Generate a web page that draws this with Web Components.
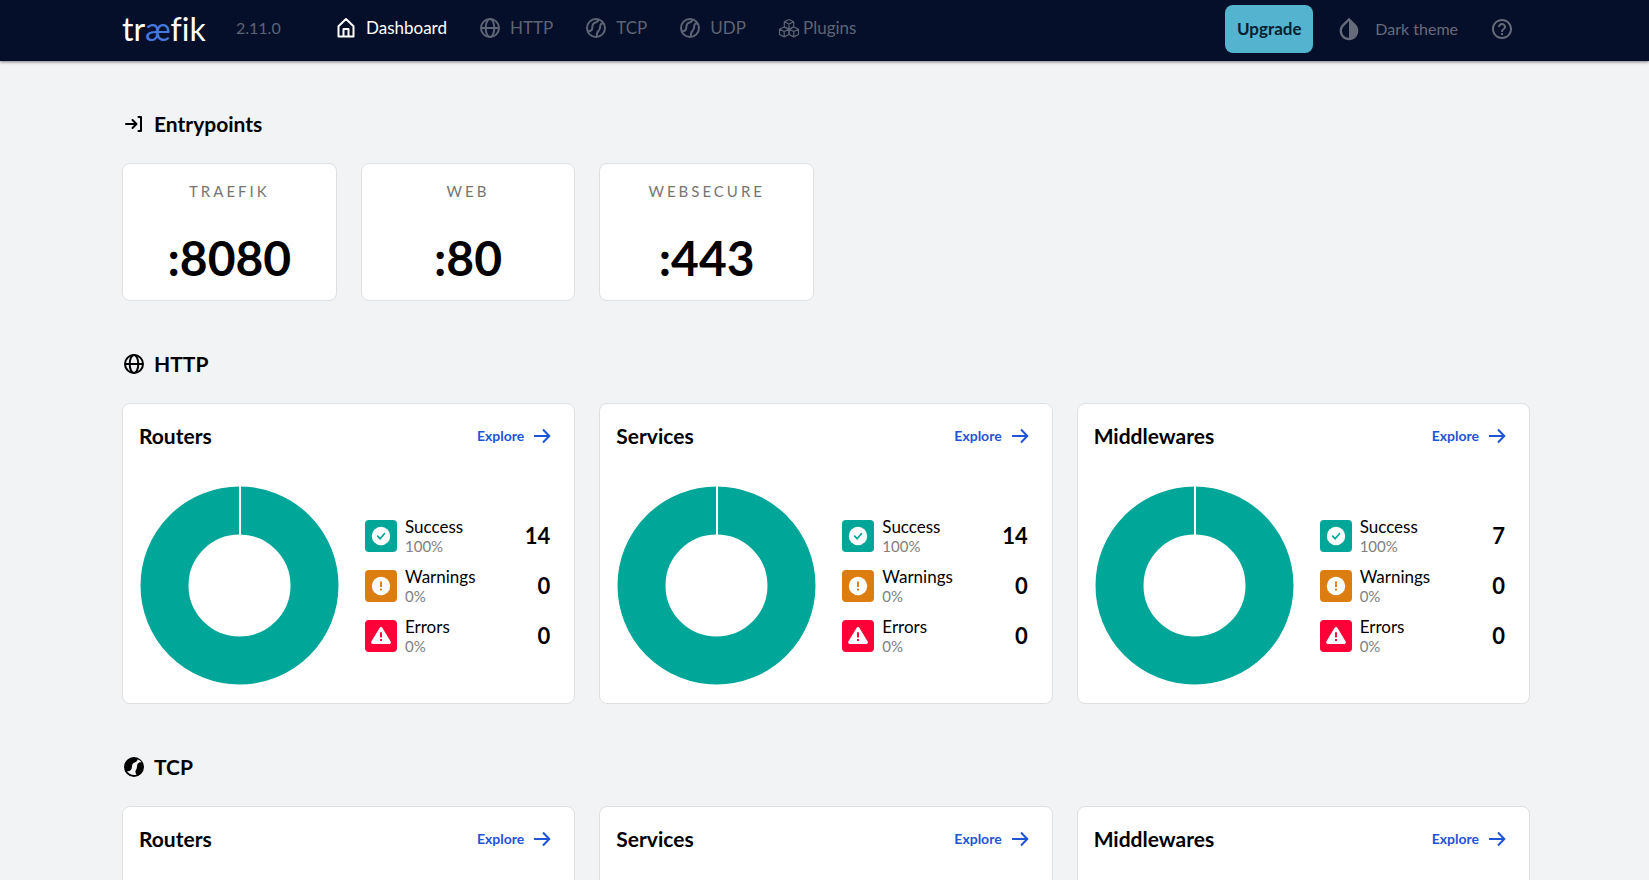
<!DOCTYPE html>
<html lang="en">
<head>
<meta charset="utf-8">
<title>Traefik</title>
<style>
html, body { margin: 0; height: 100%; }
body { font-family: Lato, "Open Sans", sans-serif; font-size: 16px; color: #000; background: #f1f3f5; }
</style>
</head>
<body>
<tf-app></tf-app>
<script>
const ICONS = {
  home: '<path d="M4.500 10.200 12 3l7.500 7.200V20.500h-15z M9.500 20.500v-7.500h5v7.500" fill="none" stroke="currentColor" stroke-width="2" stroke-linejoin="round"/>',
  globe: '<g fill="none" stroke="currentColor" stroke-width="2"><circle cx="12" cy="12" r="9"/><ellipse cx="12" cy="12" rx="4.300" ry="9"/><path d="M3 12h18"/></g>',
  ball: '<g fill="none" stroke="currentColor" stroke-width="2"><circle cx="12" cy="12" r="9"/><path d="M3.200 15.200C7 15.500 8.300 14 8.300 11.500 8.300 8.300 9.300 6.900 11.500 6.400 13.300 6 14.200 5 14.500 3.300"/><path d="M20.200 8C17.800 6.600 16.300 7.700 16.200 10.500 16.200 12.900 15.600 13.800 14.400 15 12.900 16.500 12.600 18.500 13 20.800"/></g>',
  ballSolid: '<path fill="currentColor" fill-rule="evenodd" d="M12 2a10 10 0 1 0 0 20 10 10 0 0 0 0-20zM16.800 4.800Q18.800 6 19.700 7.500C17.500 7 15.800 7.900 15.100 10.200 15 12.500 14.800 13.700 13.800 15.200 13 16.700 13.500 18.300 14.600 19.700Q8 20.800 5 16.300C8.400 16.500 9.800 14.600 9.900 12 10 9.400 10.800 8.300 12.700 7.600 14.200 7 15 6.200 15.800 4.500z"/>',
  cubes: '<g fill="none" stroke="currentColor" stroke-width="1.200" stroke-linejoin="round"><path d="M12 3.500l4.700 2.200v5.100L12 13.200 7.300 10.800V5.700zM7.300 5.700l4.700 2.300 4.700-2.300M12 8v5.200"/><path d="M7.200 11l4.700 2.200v5.300l-4.700 2.400-4.700-2.400v-5.300zM2.500 13.200l4.700 2.300 4.700-2.300M7.200 15.500v5.400"/><path d="M16.800 11l4.700 2.200v5.300l-4.700 2.400-4.700-2.400v-5.300zM12.100 13.200l4.700 2.300 4.700-2.300M16.800 15.500v5.400"/></g>',
  drop: '<path fill="currentColor" d="M17.660 7.930L12 2.270 6.340 7.930c-3.120 3.120-3.120 8.190 0 11.310C7.900 20.800 9.950 21.580 12 21.580s4.100-.780 5.660-2.340c3.120-3.120 3.120-8.190 0-11.310zM12 19.590c-1.600 0-3.110-.620-4.240-1.760C6.620 16.690 6 15.190 6 13.590s.620-3.110 1.760-4.240L12 5.100v14.490z"/>',
  help: '<path fill="currentColor" d="M11 18h2v-2h-2v2zm1-16C6.480 2 2 6.480 2 12s4.480 10 10 10 10-4.480 10-10S17.520 2 12 2zm0 18c-4.410 0-8-3.590-8-8s3.590-8 8-8 8 3.590 8 8-3.590 8-8 8zm0-14c-2.210 0-4 1.790-4 4h2c0-1.100.900-2 2-2s2 .900 2 2c0 2-3 1.750-3 5h2c0-2.250 3-2.500 3-5 0-2.210-1.790-4-4-4z"/>',
  enter: '<g fill="none" stroke="currentColor" stroke-width="2" stroke-linejoin="round" stroke-linecap="round"><path d="M4 12h10.500M10.500 8l4 4-4 4M16.500 5H19v14h-2.500"/></g>',
  arrow: '<path d="M4 12h15M13 5.500l6.300 6.500-6.300 6.500" fill="none" stroke="currentColor" stroke-width="2"/>',
  success: '<circle cx="12" cy="12" r="9.200" fill="currentColor"/><path d="M8.700 12.200l2.400 2.500 4.300-5" fill="none" stroke="var(--hole)" stroke-width="1.700" stroke-linecap="round"/>',
  warnings: '<circle cx="12" cy="12" r="9.200" fill="currentColor"/><path d="M12 7.500v5.500M12 14.600v2" fill="none" stroke="var(--hole)" stroke-width="1.900"/>',
  errors: '<path d="M12 4.800L20.200 18.300H3.800z" fill="currentColor" stroke="currentColor" stroke-width="3.400" stroke-linejoin="round"/><path d="M12 8.200v5.300M12 15.100v2" fill="none" stroke="var(--hole)" stroke-width="1.900"/>'
};

class Base extends HTMLElement {
  connectedCallback() {
    if (this.shadowRoot) return;
    this.attachShadow({ mode: 'open' }).innerHTML = `<style>${this.css()}</style>${this.html()}`;
  }
}

customElements.define('tf-icon', class extends Base {
  css() { return ':host{display:block;flex:none;width:24px;height:24px} svg{display:block;width:100%;height:100%}'; }
  html() { return `<svg viewBox="0 0 24 24" aria-hidden="true">${ICONS[this.getAttribute('name')]}</svg>`; }
});

customElements.define('tf-nav-item', class extends Base {
  css() {
    return `:host{display:block}
    a{display:flex;align-items:center;gap:8px;color:#5d6475;text-decoration:none;font-size:17px;line-height:24px}
    :host([active]) a{color:#fff}
    :host([tight]) a{gap:2px}`;
  }
  html() { return `<a href="#${this.getAttribute('icon')}"><tf-icon name="${this.getAttribute('icon')}"></tf-icon><slot></slot></a>`; }
});

customElements.define('tf-header', class extends Base {
  css() {
    return `:host{display:block;flex:none;background:#060f29;box-shadow:0 1px 3px rgba(0,0,0,.5);z-index:1}
    header{display:flex;align-items:center;padding:5px 135px 8px 122px;height:48px}
    .logo{width:84px;font-size:32px;line-height:40px;color:#fff;text-decoration:none;font-variant-ligatures:none}
    .logo span{color:#4577dd}
    .ver{margin-left:30px;width:66px;line-height:24px;padding-bottom:2px;color:#5d6475}
    nav{display:flex;gap:31px;margin-left:32px;padding-bottom:2px;flex:1}
    .tools{display:flex;align-items:center}
    button{font:inherit;border:0;background:none;color:#666b7b;display:flex;align-items:center;padding:0;line-height:24px}
    .up{height:48px;width:88px;justify-content:center;border-radius:8px;background:#54b4cf;color:#06202f;font-size:17px;font-weight:700;margin-right:22px}
    .theme{gap:12px;margin-right:32px}
    .theme tf-icon{width:28px;height:28px}`;
  }
  html() {
    return `<header><a class="logo" href="#dashboard">tr<span>æ</span>fik</a><div class="ver">2.11.0</div>
    <nav><tf-nav-item icon="home" active>Dashboard</tf-nav-item><tf-nav-item icon="globe">HTTP</tf-nav-item><tf-nav-item icon="ball">TCP</tf-nav-item><tf-nav-item icon="ball">UDP</tf-nav-item><tf-nav-item icon="cubes" tight>Plugins</tf-nav-item></nav>
    <div class="tools"><button class="up">Upgrade</button><button class="theme"><tf-icon name="drop"></tf-icon>Dark theme</button><button aria-label="Help"><tf-icon name="help"></tf-icon></button></div></header>`;
  }
});

customElements.define('tf-section', class extends Base {
  css() {
    return `:host{display:block;padding:48px 119px 0 122px}
    h2{display:flex;align-items:center;gap:8px;margin:0 0 24px;font-size:21px;line-height:30px;font-weight:700}
    .grid{display:grid;grid-template-columns:repeat(var(--cols,3),minmax(0,1fr));gap:24px}`;
  }
  html() { return `<h2><tf-icon name="${this.getAttribute('icon')}"></tf-icon>${this.getAttribute('heading')}</h2><div class="grid"><slot></slot></div>`; }
});

const CARD = 'background:#fff;border:1px solid #dfe0e2;border-radius:8px;box-sizing:border-box;';

customElements.define('tf-entry', class extends Base {
  css() {
    return `:host{display:block;${CARD}padding:15px 8px 14px;text-align:center}
    .name{font-size:15px;line-height:24px;letter-spacing:3px;color:#757575;text-transform:uppercase}
    .port{font-size:48px;line-height:56px;font-weight:700;margin-top:27px}`;
  }
  html() { return `<div class="name">${this.getAttribute('name')}</div><div class="port"><slot></slot></div>`; }
});

customElements.define('tf-stat', class extends Base {
  css() {
    return `:host{display:flex;align-items:center;gap:8px;height:32px}
    .box{display:flex;align-items:center;justify-content:center;width:32px;height:32px;border-radius:4px;background:var(--hole);color:#fff}
    :host([kind=success]){--hole:#00a697}:host([kind=warnings]){--hole:#db7d11}:host([kind=errors]){--hole:#ff0039}
    .text{flex:1}
    .label{font-size:17px;line-height:20px}
    .pct{font-size:15px;line-height:18px;color:#808080}
    .num{font-size:22px;line-height:32px;font-weight:700}`;
  }
  html() {
    const k = this.getAttribute('kind');
    return `<div class="box"><tf-icon name="${k}"></tf-icon></div><div class="text"><div class="label">${k[0].toUpperCase() + k.slice(1)}</div><div class="pct">${this.getAttribute('pct')}</div></div><div class="num">${this.getAttribute('count')}</div>`;
  }
});

customElements.define('tf-card', class extends Base {
  css() {
    return `:host{display:block;${CARD}padding:16px 24px 16px 16px;min-height:301px}
    .head{display:flex;align-items:center;justify-content:space-between;height:32px}
    h3{margin:0;font-size:21px;line-height:32px;font-weight:700}
    a{display:flex;align-items:center;gap:6px;font-size:14px;line-height:24px;font-weight:700;color:#1f54d6;text-decoration:none;margin-right:-4px}
    .body{display:flex;align-items:center;gap:26px;margin-top:34px}
    svg{display:block;flex:none;width:200px;height:200px}
    .stats{display:flex;flex-direction:column;gap:18px;flex:1}`;
  }
  html() {
    const n = this.getAttribute('count');
    return `<div class="head"><h3>${this.getAttribute('heading')}</h3><a href="#explore">Explore<tf-icon name="arrow"></tf-icon></a></div>` + (n ? `
    <div class="body"><svg viewBox="0 0 200 200" role="img" aria-label="100% success"><circle cx="100.500" cy="99.500" r="75" fill="none" stroke="#00a697" stroke-width="48"/><path d="M101 0v51" stroke="#fff" stroke-width="2"/></svg>
    <div class="stats"><tf-stat kind="success" pct="100%" count="${n}"></tf-stat><tf-stat kind="warnings" pct="0%" count="0"></tf-stat><tf-stat kind="errors" pct="0%" count="0"></tf-stat></div></div>` : '');
  }
});

customElements.define('tf-app', class extends Base {
  css() {
    return `:host{display:flex;flex-direction:column;height:100vh}
    main{flex:1;overflow-y:auto;scrollbar-width:none}
    .six{--cols:6}`;
  }
  html() {
    return `<tf-header></tf-header><main>
    <tf-section class="six" icon="enter" heading="Entrypoints"><tf-entry name="traefik">:8080</tf-entry><tf-entry name="web">:80</tf-entry><tf-entry name="websecure">:443</tf-entry></tf-section>
    <tf-section icon="globe" heading="HTTP"><tf-card heading="Routers" count="14"></tf-card><tf-card heading="Services" count="14"></tf-card><tf-card heading="Middlewares" count="7"></tf-card></tf-section>
    <tf-section icon="ballSolid" heading="TCP"><tf-card heading="Routers"></tf-card><tf-card heading="Services"></tf-card><tf-card heading="Middlewares"></tf-card></tf-section>
    </main>`;
  }
});
</script>
</body>
</html>
